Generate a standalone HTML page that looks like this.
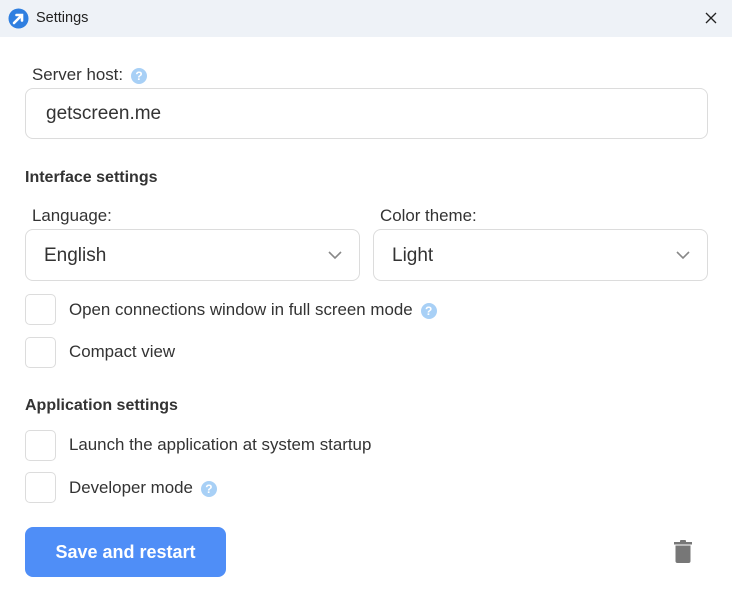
<!DOCTYPE html>
<html><head><style>
*{box-sizing:border-box;margin:0;padding:0}
body{width:732px;height:603px;background:#fff;font-family:"Liberation Sans",sans-serif;color:#333;position:relative;overflow:hidden}
.title{position:absolute;left:0;top:0;width:732px;height:37px;background:#eef2f7}
.title .t{position:absolute;left:36px;top:10px;font-size:14.5px;color:#222}
.abs{position:absolute}
.lbl{font-size:16.9px;color:#333}
.h{font-size:16px;font-weight:bold;color:#333}
.box{position:absolute;border:1px solid #dcdcdc;border-radius:8px;background:#fff}
.cb{position:absolute;left:25px;width:31px;height:31px;border:1px solid #dcdcdc;border-radius:5px}
.q{display:inline-block;width:16px;height:16px;border-radius:50%;background:#a8d0f6;color:#fff;font-size:12px;font-weight:bold;text-align:center;line-height:16px;vertical-align:middle;margin-left:8px}
.sel{font-size:19px;color:#333}
</style></head><body>
<div class="title">
<svg class="abs" style="left:8px;top:8px" width="21" height="21" viewBox="0 0 21 21"><circle cx="10.5" cy="10.5" r="10" fill="#2f7fe0"/><path d="M6 15 L13.5 7.5 M8.5 7 H14 V12.5" stroke="#fff" stroke-width="2.6" fill="none" stroke-linecap="round"/></svg>
<div class="t">Settings</div>
<svg class="abs" style="left:705px;top:12px" width="12" height="12" viewBox="0 0 12 12"><path d="M1 1L11 11M11 1L1 11" stroke="#222" stroke-width="1.3"/></svg>
</div>
<div class="abs lbl" style="left:32px;top:65px">Server host:<span class="q">?</span></div>
<div class="box" style="left:25px;top:88px;width:683px;height:51px"><span class="abs sel" style="left:20px;top:14px">getscreen.me</span></div>
<div class="abs h" style="left:25px;top:169px">Interface settings</div>
<div class="abs lbl" style="left:32px;top:206px">Language:</div>
<div class="abs lbl" style="left:380px;top:206px">Color theme:</div>
<div class="box" style="left:25px;top:229px;width:335px;height:52px"><span class="abs sel" style="left:18px;top:15px">English</span>
<svg class="abs" style="left:302px;top:21px" width="14" height="9" viewBox="0 0 14 9"><path d="M1 1L7 7L13 1" stroke="#888" stroke-width="1.6" fill="none"/></svg></div>
<div class="box" style="left:373px;top:229px;width:335px;height:52px"><span class="abs sel" style="left:18px;top:15px">Light</span>
<svg class="abs" style="left:302px;top:21px" width="14" height="9" viewBox="0 0 14 9"><path d="M1 1L7 7L13 1" stroke="#888" stroke-width="1.6" fill="none"/></svg></div>
<div class="cb" style="top:294px"></div><div class="abs lbl" style="left:69px;top:300px">Open connections window in full screen mode<span class="q">?</span></div>
<div class="cb" style="top:337px"></div><div class="abs lbl" style="left:69px;top:342px">Compact view</div>
<div class="abs h" style="left:25px;top:397px">Application settings</div>
<div class="cb" style="top:430px"></div><div class="abs lbl" style="left:69px;top:435px">Launch the application at system startup</div>
<div class="cb" style="top:472px"></div><div class="abs lbl" style="left:69px;top:478px">Developer mode<span class="q">?</span></div>
<div class="abs" style="left:25px;top:527px;width:201px;height:50px;background:#4f8ef7;border-radius:8px;color:#fff;font-weight:bold;font-size:18px;text-align:center;line-height:50px">Save and restart</div>
<svg class="abs" style="left:673px;top:540px" width="20" height="24" viewBox="0 0 20 24"><rect x="1" y="2" width="18" height="2.5" fill="#777"/><rect x="7" y="0" width="6" height="3" rx="1" fill="#777"/><path d="M2.5 5.5H17.5V21a2 2 0 0 1-2 2H4.5a2 2 0 0 1-2-2Z" fill="#777"/></svg>
</body></html>
